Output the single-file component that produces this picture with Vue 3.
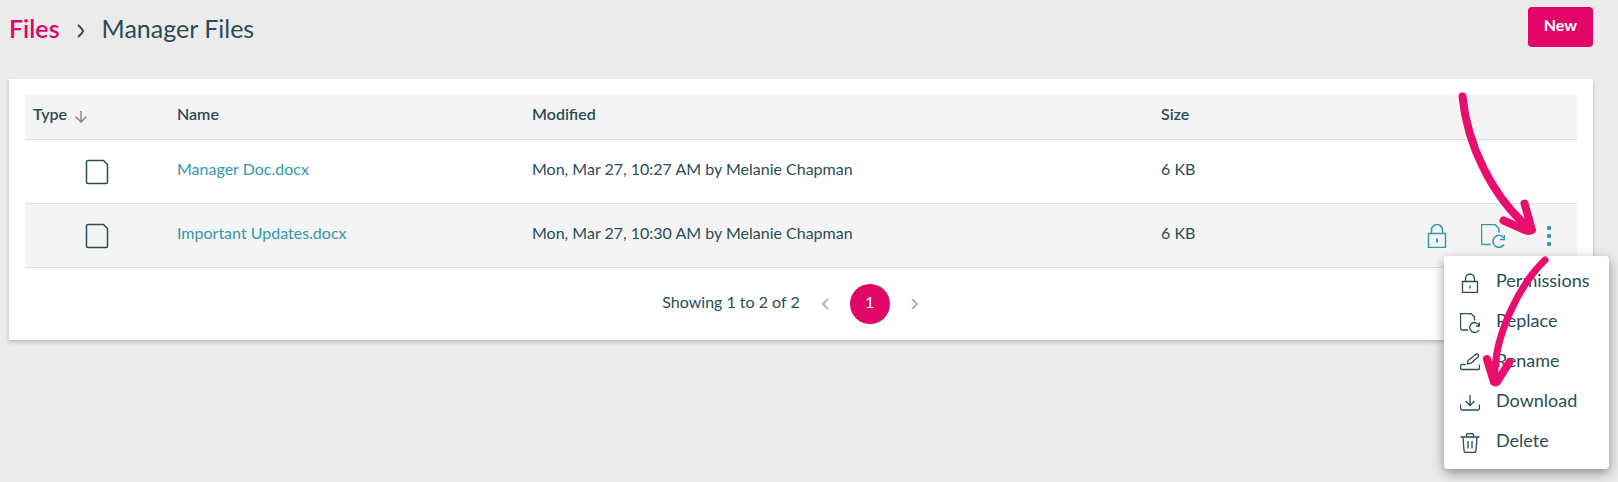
<script setup>
const files = [
  { name: 'Manager Doc.docx', modified: 'Mon, Mar 27, 10:27 AM by Melanie Chapman', size: '6 KB', active: false },
  { name: 'Important Updates.docx', modified: 'Mon, Mar 27, 10:30 AM by Melanie Chapman', size: '6 KB', active: true },
]
const menu = ['Permissions', 'Replace', 'Rename', 'Download', 'Delete']
</script>

<template>
  <div class="page">
    <header class="top">
      <nav class="crumbs" aria-label="Breadcrumb">
        <a href="#" class="crumb-link">Files</a>
        <svg class="crumb-sep" viewBox="0 0 8 14" aria-hidden="true"><path d="M1 1q4.500 4 5 6q-.5 2-5 6" /></svg>
        <h1 class="crumb-current">Manager Files</h1>
      </nav>
      <button type="button" class="new">New</button>
    </header>

    <main class="card">
      <table class="files">
        <colgroup>
          <col class="c-type" />
          <col class="c-name" />
          <col />
          <col class="c-size" />
          <col class="c-actions" />
        </colgroup>
        <thead>
          <tr>
            <th scope="col">
              <button type="button" class="sort">
                Type
                <svg viewBox="0 0 12 12" aria-hidden="true"><path d="M6 0v11M.5 5.500L6 11l5.500-5.500" /></svg>
              </button>
            </th>
            <th scope="col">Name</th>
            <th scope="col">Modified</th>
            <th scope="col">Size</th>
            <th scope="col" aria-label="Actions"></th>
          </tr>
        </thead>
        <tbody>
          <tr v-for="file in files" :key="file.name" :class="{ active: file.active }">
            <td class="icon-cell">
              <svg class="doc" viewBox="0 0 24 26" role="img" aria-label="Document">
                <path d="M3 1.500h15.500l4 4V23a1.500 1.500 0 0 1-1.500 1.500H3A1.500 1.500 0 0 1 1.500 23V3A1.500 1.500 0 0 1 3 1.500z" />
              </svg>
            </td>
            <td><a href="#">{{ file.name }}</a></td>
            <td>{{ file.modified }}</td>
            <td>{{ file.size }}</td>
            <td class="actions-cell">
              <div v-if="file.active" class="actions">
                <button type="button" aria-label="Permissions">
                  <svg viewBox="0 0 24 24"><path d="M3.500 9.500h17v14h-17zM6.500 9.500V6a5.500 5.500 0 0 1 11 0v3.500" /><path class="bold" d="M12 14.500v4" /></svg>
                </button>
                <button type="button" aria-label="Replace">
                  <svg viewBox="0 0 24 24"><path d="M9.500 20.500h-7a2 2 0 0 1-2-2V.5h13.500l4 4v4M22.500 13.500a6 6 0 1 0 .500 7M23.500 11v4.500H19" /></svg>
                </button>
                <div class="more">
                  <button type="button" aria-label="More actions" aria-haspopup="menu" aria-expanded="true">
                    <svg class="dots" viewBox="0 0 24 24"><circle cx="12" cy="4" r="2.200" /><circle cx="12" cy="12" r="2.200" /><circle cx="12" cy="20" r="2.200" /></svg>
                  </button>
                  <div class="menu" role="menu">
                    <button v-for="item in menu" :key="item" type="button" role="menuitem">
                      <svg viewBox="0 0 20 20" aria-hidden="true">
                        <path v-if="item === 'Permissions'" d="M2.500 8.500h15v11h-15zM5.500 8.500v-3a4.500 4.500 0 0 1 9 0v3M10 12.500v3" />
                        <path v-else-if="item === 'Replace'" d="M8 17H2.500A2 2 0 0 1 .5 15V.5h10.500l3.500 3.500v3.500M19 12a5 5 0 1 0 0 5M19.500 9.500v3.500H16" />
                        <path v-else-if="item === 'Rename'" d="M7.500 11l.5-3.500L15.500 1.500q1.500-1 2.500 0q1 1.200 0 2.500L11 10.200zM5.500 11.500H2q-1.500 0-1.500 1.500v2.500q0 1 1 1h17q1 0 1-1v-4" />
                        <path v-else-if="item === 'Download'" d="M10 2v10M5.500 8l4.500 4.500L14.500 8M.5 11.500v3.500a2 2 0 0 0 2 2h15a2 2 0 0 0 2-2v-3.500" />
                        <path v-else d="M.5 4h19M3 4l1 13.500a2 2 0 0 0 2 2h8a2 2 0 0 0 2-2L17 4M6.500 4V2a1.500 1.500 0 0 1 1.500-1.500h4a1.500 1.500 0 0 1 1.500 1.500v2M8 8v7.500M12 8v7.500" />
                      </svg>
                      <span>{{ item }}</span>
                    </button>
                  </div>
                </div>
              </div>
            </td>
          </tr>
        </tbody>
      </table>

      <footer class="pager">
        <span class="summary">Showing 1 to 2 of 2</span>
        <button type="button" class="step" aria-label="Previous page">
          <svg viewBox="0 0 8 12"><path d="M7 1L2 6l5 5" /></svg>
        </button>
        <button type="button" class="current" aria-current="page">1</button>
        <button type="button" class="step" aria-label="Next page">
          <svg viewBox="0 0 8 12"><path d="M1 1l5 5-5 5" /></svg>
        </button>
      </footer>
    </main>

    <svg class="pointers" viewBox="0 0 218 400" aria-hidden="true">
      <path d="M62.500 96.500C67 143 91 196 130 229" />
      <path d="M124.500 203.500L132 230q-3 2-7 0L103.500 220.500" />
      <path class="tail" d="M145 260C121 283 92 337 95 382" />
      <path d="M87 359l7 23q1 1 3 0L109.500 362" />
    </svg>
  </div>
</template>

<style>
body {
  margin: 0;
  background: #ebebeb;
}
</style>

<style scoped>
.page {
  position: relative;
  box-sizing: border-box;
  min-height: 100vh;
  padding: 7px 25px 0 9px;
  font-family: Lato, "Open Sans", sans-serif;
  font-size: 16px;
  line-height: 24px;
  color: #2a4d55;
}
button {
  margin: 0;
  padding: 0;
  border: 0;
  background: none;
  font: inherit;
  color: inherit;
  cursor: pointer;
}
svg {
  flex: none;
  fill: none;
  stroke: currentColor;
}
a {
  color: #3298ab;
  text-decoration: none;
}
.top {
  display: flex;
  justify-content: space-between;
  align-items: flex-start;
  margin-bottom: 30px;
}
.crumbs {
  display: flex;
  align-items: center;
  height: 42px;
  font-size: 25px;
  line-height: 32px;
}
.crumb-link {
  color: #e20669;
  font-weight: 600;
}
.crumb-sep {
  width: 8px;
  height: 14px;
  margin: 5px 17px 0;
  stroke-width: 2;
}
.crumb-current {
  margin: 0;
  font: inherit;
}
.new {
  height: 40px;
  padding: 0 16px 4px;
  border-radius: 4px;
  background: #e20669;
  color: #fff;
  font-weight: 700;
}
.card {
  padding: 16px 16px 0;
  background: #fff;
  box-shadow: 0 2px 4px rgba(0, 0, 0, 0.22);
}
.files {
  width: 100%;
  table-layout: fixed;
  border-collapse: separate;
  border-spacing: 0;
}
.c-type { width: 144px; }
.c-name { width: 355px; }
.c-size { width: 120px; }
.c-actions { width: 304px; }
th,
td {
  padding: 0 8px 5px;
  border-bottom: 1px solid #dedede;
  text-align: left;
  vertical-align: middle;
}
th {
  height: 37px;
  padding-bottom: 7px;
  background: #f4f4f4;
  font-weight: 600;
}
td { height: 58px; }
.active td { background: #f4f4f4; }
.sort {
  display: flex;
  align-items: center;
  gap: 8px;
}
.sort svg {
  width: 12px;
  height: 12px;
  margin-top: 6px;
  color: #888;
  stroke-width: 1.500;
}
.icon-cell {
  padding-bottom: 0;
  text-align: center;
}
.doc {
  display: block;
  width: 24px;
  height: 26px;
  margin: 0 auto;
  stroke-width: 1.500;
}
.actions-cell { padding: 0 8px; }
.actions {
  display: flex;
  justify-content: flex-end;
  gap: 16px;
}
.actions button {
  display: flex;
  align-items: center;
}
.actions > button,
.more > button {
  justify-content: center;
  width: 40px;
  height: 40px;
  color: #3298ab;
}
.actions > button svg,
.more > button svg {
  width: 24px;
  height: 24px;
  stroke-width: 1.500;
}
.actions svg .bold { stroke-width: 2; }
.more > button .dots {
  fill: currentColor;
  stroke: none;
}
.more { position: relative; }
.menu {
  position: absolute;
  z-index: 1;
  top: 40px;
  right: -40px;
  min-width: 165px;
  padding: 6px 0 7px;
  border-radius: 4px;
  background: #fff;
  box-shadow: 0 4px 12px rgba(0, 0, 0, 0.4);
}
.menu button {
  width: 100%;
  height: 40px;
  gap: 16px;
  padding: 0 16px;
  font-size: 18px;
  white-space: nowrap;
}
.menu svg {
  width: 20px;
  height: 20px;
  margin-top: 2px;
  stroke-width: 1.300;
}
.menu span { padding-bottom: 4px; }
.pager {
  display: flex;
  justify-content: center;
  align-items: center;
  height: 72px;
}
.summary { padding-bottom: 4px; }
.step {
  display: flex;
  justify-content: center;
  align-items: center;
  width: 24px;
  height: 40px;
  margin: 0 13px;
  color: #abb8bb;
}
.step svg {
  width: 8px;
  height: 12px;
  stroke-width: 2;
}
.current {
  width: 40px;
  height: 40px;
  padding-bottom: 4px;
  border-radius: 50%;
  background: #e20669;
  color: #fff;
}
.pointers {
  position: absolute;
  z-index: 2;
  top: 0;
  right: 0;
  width: 218px;
  height: 400px;
  color: #ea0d6e;
  stroke-width: 8;
  stroke-linecap: round;
  stroke-linejoin: round;
  pointer-events: none;
}
.pointers .tail { stroke-width: 7; }
</style>
